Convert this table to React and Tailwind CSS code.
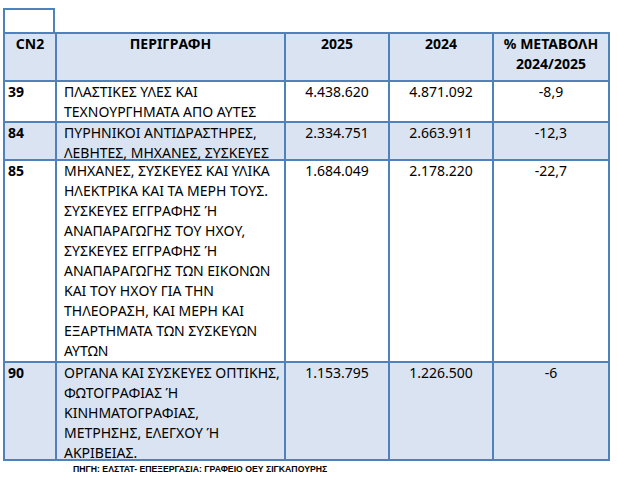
const rows = [
  { code: '39', desc: ['ΠΛΑΣΤΙΚΕΣ ΥΛΕΣ ΚΑΙ', 'ΤΕΧΝΟΥΡΓΗΜΑΤΑ ΑΠΟ ΑΥΤΕΣ'], y25: '4.438.620', y24: '4.871.092', pct: '-8,9', shade: false, h: 'h-[39px]' },
  { code: '84', desc: ['ΠΥΡΗΝΙΚΟΙ ΑΝΤΙΔΡΑΣΤΗΡΕΣ,', 'ΛΕΒΗΤΕΣ, ΜΗΧΑΝΕΣ, ΣΥΣΚΕΥΕΣ'], y25: '2.334.751', y24: '2.663.911', pct: '-12,3', shade: true, h: 'h-[36px]' },
  {
    code: '85',
    desc: [
      'ΜΗΧΑΝΕΣ, ΣΥΣΚΕΥΕΣ ΚΑΙ ΥΛΙΚΑ',
      'ΗΛΕΚΤΡΙΚΑ ΚΑΙ ΤΑ ΜΕΡΗ ΤΟΥΣ.',
      'ΣΥΣΚΕΥΕΣ ΕΓΓΡΑΦΗΣ Ή',
      'ΑΝΑΠΑΡΑΓΩΓΗΣ ΤΟΥ ΗΧΟΥ,',
      'ΣΥΣΚΕΥΕΣ ΕΓΓΡΑΦΗΣ Ή',
      'ΑΝΑΠΑΡΑΓΩΓΗΣ ΤΩΝ ΕΙΚΟΝΩΝ',
      'ΚΑΙ ΤΟΥ ΗΧΟΥ ΓΙΑ ΤΗΝ',
      'ΤΗΛΕΟΡΑΣΗ, ΚΑΙ ΜΕΡΗ ΚΑΙ',
      'ΕΞΑΡΤΗΜΑΤΑ ΤΩΝ ΣΥΣΚΕΥΩΝ',
      'ΑΥΤΩΝ',
    ],
    y25: '1.684.049', y24: '2.178.220', pct: '-22,7', shade: false, h: 'h-[200px]',
  },
  {
    code: '90',
    desc: ['ΟΡΓΑΝΑ ΚΑΙ ΣΥΣΚΕΥΕΣ ΟΠΤΙΚΗΣ,', 'ΦΩΤΟΓΡΑΦΙΑΣ Ή', 'ΚΙΝΗΜΑΤΟΓΡΑΦΙΑΣ,', 'ΜΕΤΡΗΣΗΣ, ΕΛΕΓΧΟΥ Ή', 'ΑΚΡΙΒΕΙΑΣ.'],
    y25: '1.153.795', y24: '1.226.500', pct: '-6', shade: true, h: 'h-[96px]',
  },
]

const cell = 'border-2 border-[#4f81bd] p-0 align-top leading-[20px]'

export default function App() {
  return (
    <div className="h-[478px] w-[617px] overflow-hidden bg-white pt-[8px] pl-[3px] font-['Noto_Sans',sans-serif] text-[14px] text-black">
      <div className="h-[24px] w-[52px] border-2 border-b-0 border-[#4f81bd]" />
      <table className="w-[605px] table-fixed border-collapse">
        <colgroup>
          <col className="w-[52px]" />
          <col className="w-[229px]" />
          <col className="w-[104px]" />
          <col className="w-[104px]" />
          <col className="w-[116px]" />
        </colgroup>
        <thead>
          <tr className="bg-[#d9e3f1] font-bold">
            <th className={`${cell} text-center`}><div className="h-[46px]">CN2</div></th>
            <th className={`${cell} text-center`}>ΠΕΡΙΓΡΑΦΗ</th>
            <th className={`${cell} text-center`}>2025</th>
            <th className={`${cell} text-center`}>2024</th>
            <th className={`${cell} text-center`}>% ΜΕΤΑΒΟΛΗ<br />2024/2025</th>
          </tr>
        </thead>
        <tbody>
          {rows.map((row) => (
            <tr key={row.code} className={row.shade ? 'bg-[#d9e3f1]' : 'bg-white'}>
              <td className={`${cell} pl-[3px] font-bold`}>{row.code}</td>
              <td className={`${cell} whitespace-nowrap pl-[7px]`}>
                <div className={row.h}>
                  {row.desc.map((line, i) => <div key={i}>{line}</div>)}
                </div>
              </td>
              <td className={`${cell} text-center`}>{row.y25}</td>
              <td className={`${cell} text-center`}>{row.y24}</td>
              <td className={`${cell} text-center`}>{row.pct}</td>
            </tr>
          ))}
        </tbody>
      </table>
      <p className="mt-[3px] pl-[70px] font-['Liberation_Sans',Arial,sans-serif] text-[8.7px] font-bold leading-[10px]">
        ΠΗΓΗ: ΕΛΣΤΑΤ- ΕΠΕΞΕΡΓΑΣΙΑ: ΓΡΑΦΕΙΟ ΟΕΥ ΣΙΓΚΑΠΟΥΡΗΣ
      </p>
    </div>
  )
}
